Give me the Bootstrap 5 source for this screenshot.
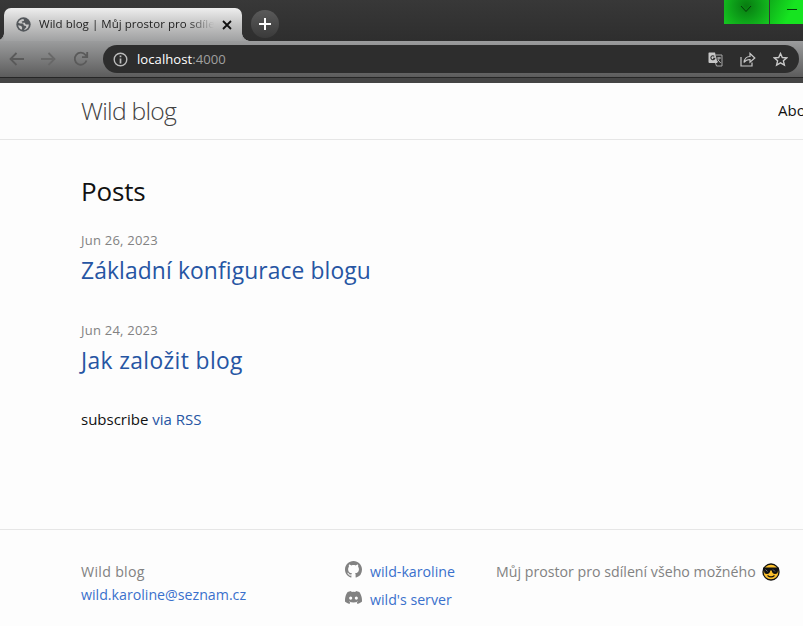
<!DOCTYPE html>
<html lang="cs">
<head>
<meta charset="utf-8">
<meta name="viewport" content="width=device-width, initial-scale=1">
<title>Wild blog | Můj prostor pro sdílení všeho možného</title>
<link href="https://cdn.jsdelivr.net/npm/bootstrap@5.3.0/dist/css/bootstrap.min.css" rel="stylesheet">
<style>
body{font-family:"Open Sans","Noto Sans",sans-serif;font-size:15px;line-height:24px;background:#fdfdfd;color:#111;height:626px;overflow:hidden}
a{text-decoration:none;color:#3a70cc}
svg{flex:none;display:block}
/* browser window */
.chrome{height:83px;background:#454545}
.tabstrip{height:41px;background:linear-gradient(#383838,#2e2e2e)}
.tab{width:238px;height:33px;margin:8px 0 0 4px;padding:0 10px 0 12px;border-radius:7px 7px 0 0;background:linear-gradient(#eee,#c4c4c4 50%,#a0a1a2);font-size:11.5px;line-height:20px;color:#222}
.tab::before,.tab::after{content:"";position:absolute;bottom:0;width:8px;height:8px}
.tab::before{left:-8px;background:radial-gradient(circle at 0 0,transparent 7.5px,#a0a1a2 8px)}
.tab::after{right:-8px;background:radial-gradient(circle at 100% 0,transparent 7.5px,#a0a1a2 8px)}
.tab-title{width:177px;margin-top:-2px;letter-spacing:.04px;-webkit-mask-image:linear-gradient(90deg,#000 84%,transparent 99%)}
.plus{width:28px;height:28px;margin:10px 0 0 9px;background:linear-gradient(#5a5a5a,#3a3a3a)}
.winbtns{height:24px}
.winbtn{width:45px;background:radial-gradient(circle at 50% 25%,#087c10,#0c9a18 40%,#16c820)}
.winbtn-min{width:33px;margin-left:1px;background:linear-gradient(115deg,#0fae1a,#16e420 60%)}
.toolbar{height:36px;background:linear-gradient(#9b9c9d,#5c5c5c)}
.nav-icons{width:103px;padding-left:9px;gap:17px;color:#5a5a5a}
.omni{height:28px;width:696px;padding:0 11px 0 10px;background:#2d2d2d;font-size:13.1px;color:#a0a0a0}
.host{color:#fff}
.address{margin-left:9px;letter-spacing:.04px}
.omni-icons{gap:17px;color:#c8c8c8}
.darkline{height:1px;background:#262626}
/* page */
.site-header{height:57px;border-bottom:1px solid #e6e6e6;padding-left:81px}
.site-title{font-size:24.7px;font-weight:300;letter-spacing:-.75px;color:#424242}
.about{width:25px;margin-top:-2px}
.posts{padding:31px 0 98px 81px}
.posts-h{font-size:26px;line-height:40px;font-weight:400;letter-spacing:-.15px;margin-bottom:19px}
.post-date{font-size:13px;letter-spacing:.23px;color:#828282;line-height:21px}
.post-title{font-size:22.8px;letter-spacing:.13px;line-height:36px;margin:2px 0 31px;font-weight:400}
.post-title.wider{letter-spacing:.38px}
.post-title a,.rss a{color:#2655a3}
.rss{margin-top:-3px}
.site-footer{border-top:1px solid #e6e6e6;color:#828282;font-size:14.2px;padding:28px 0 0 81px}
.contact{width:264px;line-height:23px;padding-top:2px}
.blog-name{letter-spacing:.3px}
.social{width:151px;line-height:28px}
.social li{gap:8px}
.social svg{margin-top:-5px}
.about-text{line-height:28px;gap:6px}
</style>
</head>
<body>
<div class="chrome">
 <div class="tabstrip d-flex">
  <div class="tab position-relative d-flex align-items-center">
   <svg width="15" height="15" viewBox="0 0 24 24"><circle cx="12" cy="12" r="11.5" fill="#53575b"/><path d="M12 3C8 3 5 5 3.500 9l3 1.500h5l1 3 3.500 1 .5 2-4 4c5 0 8-4 8-8.500h-5l-1.500-3H10l-1-2 4-1z" fill="#c8c8c8"/><path d="M3.500 13l5 1.500 1.500 3-1 3C6 19 4 16 3.500 13z" fill="#c8c8c8"/></svg>
   <span class="tab-title ms-2 overflow-hidden text-nowrap">Wild blog | Můj prostor pro sdílení</span>
   <svg width="10" height="10" viewBox="0 0 10 10" class="ms-auto"><path d="M1 1l8 8M9 1L1 9" stroke="#111" stroke-width="1.8"/></svg>
  </div>
  <div class="plus rounded-circle d-flex align-items-center justify-content-center"><svg width="12" height="12"><path d="M6 0v12M0 6h12" stroke="#fff" stroke-width="2"/></svg></div>
  <div class="winbtns d-flex ms-auto">
   <div class="winbtn"><svg width="45" height="24"><path d="M17 6l5 5.5L27 6" fill="none" stroke="#043c08"/></svg></div>
   <div class="winbtn-min"><svg width="33" height="24"><path d="M17 9.500h10" stroke="#043c08"/></svg></div>
  </div>
 </div>
 <div class="toolbar d-flex align-items-center">
  <div class="nav-icons d-flex align-items-center">
   <svg width="15" height="14" viewBox="0 0 15 14" fill="none" stroke="currentColor" stroke-width="1.8"><path d="M15 7H1.500M7.500 1l-6 6 6 6"/></svg>
   <svg width="15" height="14" viewBox="0 0 15 14" fill="none" stroke="#686868" stroke-width="1.8"><path d="M0 7h13.500M7.500 1l6 6-6 6"/></svg>
   <svg width="16" height="16" viewBox="0 0 16 16" fill="none" stroke="currentColor" stroke-width="1.8"><path d="M13.500 9.500A6 6 0 1 1 12.500 4L14 5.500M14.200 1v5.200H9"/></svg>
  </div>
  <div class="omni rounded-pill d-flex align-items-center">
   <svg width="15" height="15" viewBox="0 0 15 15"><circle cx="7.500" cy="7.500" r="6.300" fill="none" stroke="#bbb" stroke-width="1.4"/><path d="M7.500 3.500v1.800M7.500 6.500v5" stroke="#bbb" stroke-width="1.7"/></svg>
   <span class="address"><span class="host">localhost</span>:4000</span>
   <div class="omni-icons d-flex align-items-center ms-auto">
    <svg width="15" height="15" viewBox="0 0 15 15"><path d="M1 .5h6l2.500 10.500H1.500Q.5 11 .5 10V1z" fill="#c8c8c8"/><path d="M7.500 3h6.500v11H8.500l-1-3" fill="none" stroke="#a8a8a8"/><path d="M6.300 4.300a2 2 0 1 0 .5 2H5" fill="none" stroke="#2d2d2d" stroke-width="1.1"/><path d="M8.700 6h4.300M11 5v1c0 2-1 3-2 4M9.700 7.500l3 3.500" fill="none" stroke="#b8b8b8"/></svg>
    <svg width="16" height="15" viewBox="0 0 16 15" fill="none" stroke="currentColor" stroke-width="1.2"><path d="M1 5v9h11v-3.500"/><path d="M4 10.500C4.500 6.500 6.500 4.500 10 4.500V1.500l4.800 4.500L10 10.200V7.500C7.500 7.500 5.500 8.300 4 10.500z"/></svg>
    <svg width="15" height="15" viewBox="0 0 15 15" fill="none" stroke="currentColor" stroke-width="1.4"><path d="M7.500 1.500l1.800 4 4.400.4-3.300 2.900 1 4.300-3.900-2.300-3.900 2.300 1-4.300L1.300 5.900l4.400-.4z"/></svg>
   </div>
  </div>
 </div>
 <div class="darkline"></div>
</div>
<header class="site-header d-flex align-items-center justify-content-between">
 <span class="site-title">Wild blog</span>
 <span class="about overflow-hidden">About</span>
</header>
<main class="posts">
 <h2 class="posts-h">Posts</h2>
 <div class="post-date">Jun 26, 2023</div>
 <h3 class="post-title"><a href="#">Základní konfigurace blogu</a></h3>
 <div class="post-date">Jun 24, 2023</div>
 <h3 class="post-title wider"><a href="#">Jak založit blog</a></h3>
 <p class="rss mb-0">subscribe <a href="#">via RSS</a></p>
</main>
<footer class="site-footer d-flex">
 <div class="contact"><span class="blog-name">Wild blog</span><br><a href="#">wild.karoline@seznam.cz</a></div>
 <ul class="social list-unstyled mb-0">
  <li class="d-flex align-items-center">
   <svg width="17" height="17" viewBox="0 0 16 16" fill="#828282"><path d="M8 0C3.580 0 0 3.580 0 8c0 3.540 2.290 6.530 5.470 7.590.4.070.55-.17.55-.38 0-.19-.01-.82-.01-1.490-2.010.37-2.530-.49-2.690-.94-.09-.23-.48-.94-.82-1.130-.28-.15-.68-.52-.01-.53.63-.01 1.080.58 1.230.82.72 1.210 1.870.87 2.330.66.070-.52.28-.87.51-1.070-1.780-.2-3.640-.89-3.640-3.950 0-.87.31-1.590.82-2.150-.08-.2-.36-1.020.08-2.120 0 0 .67-.21 2.200.82.64-.18 1.320-.27 2-.27s1.360.09 2 .27c1.530-1.040 2.200-.82 2.200-.82.44 1.100.16 1.920.08 2.120.51.56.82 1.270.82 2.150 0 3.070-1.870 3.750-3.650 3.950.29.25.54.73.54 1.480 0 1.070-.01 1.930-.01 2.200 0 .21.15.46.55.38A8.010 8.010 0 0 0 16 8c0-4.420-3.580-8-8-8z"/></svg>
   <a href="#">wild-karoline</a></li>
  <li class="d-flex align-items-center">
   <svg width="17" height="17" viewBox="0 0 16 16" fill="#828282"><path d="M13.545 2.907a13.200 13.200 0 0 0-3.257-1.011.05.05 0 0 0-.052.025c-.141.25-.297.577-.406.833a12.200 12.200 0 0 0-3.658 0 8 8 0 0 0-.412-.833.05.05 0 0 0-.052-.025c-1.125.194-2.220.534-3.257 1.011C.356 6.024-.213 9.047.066 12.032c.001.014.01.028.021.037a13.300 13.300 0 0 0 3.995 2.020.05.05 0 0 0 .056-.019q.463-.63.818-1.329a.05.05 0 0 0-.028-.07 9 9 0 0 1-1.248-.595.05.05 0 0 1-.005-.085l.248-.195a.05.05 0 0 1 .051-.007c2.619 1.196 5.454 1.196 8.041 0a.05.05 0 0 1 .053.007l.248.195a.05.05 0 0 1-.004.085 8 8 0 0 1-1.249.594.05.05 0 0 0-.028.071c.24.465.515.909.817 1.329a.05.05 0 0 0 .056.019 13.200 13.200 0 0 0 4.001-2.020.05.05 0 0 0 .021-.037c.334-3.451-.559-6.449-2.365-9.125zM5.350 10.190c-.789 0-1.438-.724-1.438-1.612s.637-1.613 1.438-1.613c.807 0 1.450.73 1.438 1.613 0 .888-.637 1.612-1.438 1.612zm5.316 0c-.788 0-1.438-.724-1.438-1.612s.637-1.613 1.438-1.613c.807 0 1.451.73 1.438 1.613 0 .888-.631 1.612-1.438 1.612z"/></svg>
   <a href="#">wild's server</a></li>
 </ul>
 <div class="about-text d-flex align-items-center align-self-start">Můj prostor pro sdílení všeho možného
  <svg width="18" height="18" viewBox="0 0 18 18"><circle cx="9" cy="9" r="8" fill="#fbc02d" stroke="#111" stroke-width="1.3"/><path d="M1 4.500h16v2l-1 .5c0 3-1 4-3 4s-3-1.500-3.300-3.500H8.300C8 9.500 7 11 5 11S2 10 2 7l-1-.5z" fill="#111"/><path d="M3.500 6.500l2 2M11 6.500l2 2" stroke="#888" stroke-width=".8"/><path d="M5.500 12.500q3.500 2.800 7 0" fill="none" stroke="#111" stroke-width="1.1"/></svg>
 </div>
</footer>
</body>
</html>
